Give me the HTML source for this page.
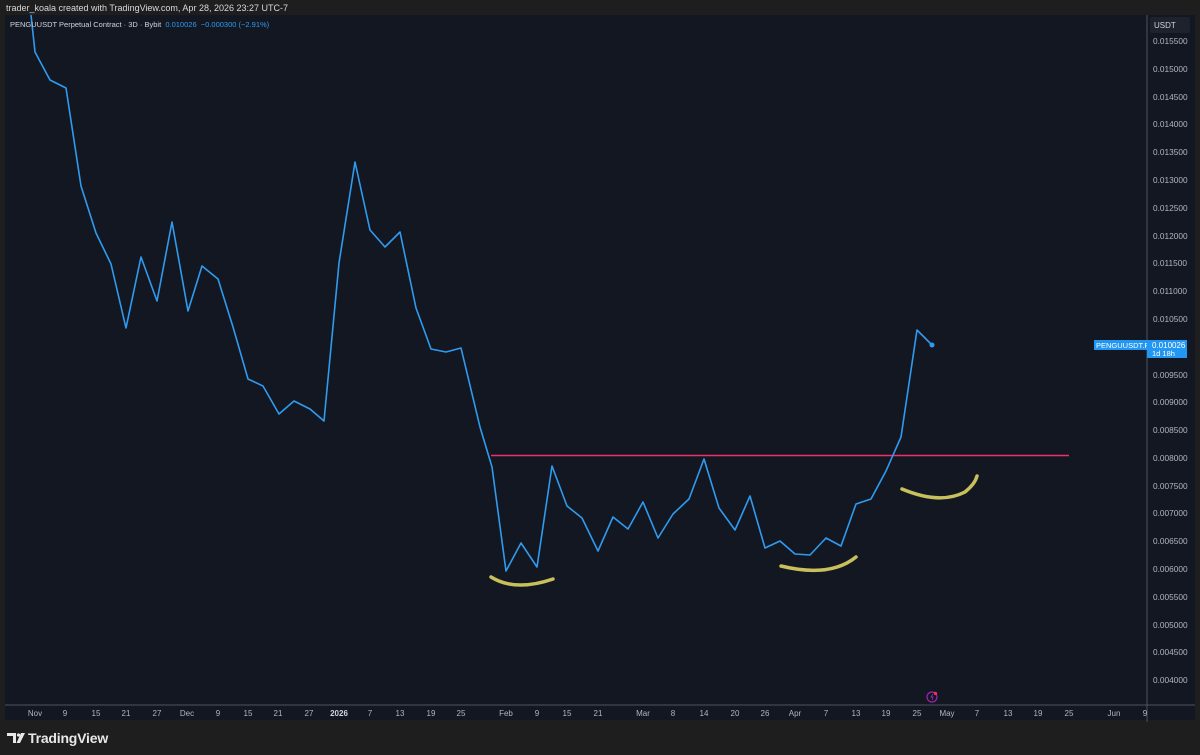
<!DOCTYPE html>
<html><head><meta charset="utf-8"><style>
body{margin:0;width:1200px;height:755px;background:#1e1e1f;overflow:hidden;font-family:"Liberation Sans",sans-serif;position:relative}
.t{position:absolute;white-space:nowrap}
</style></head><body>
<div class="t" style="left:6px;top:3px;font-size:9px;color:#d8d8d8">trader_koala created with TradingView.com, Apr 28, 2026 23:27 UTC-7</div>
<svg width="1200" height="755" style="position:absolute;left:0;top:0">
<rect x="5" y="15" width="1190" height="705" fill="#131722"/>
<line x1="1147" y1="15" x2="1147" y2="722" stroke="#50535e" stroke-width="1"/>
<line x1="5" y1="705" x2="1195" y2="705" stroke="#50535e" stroke-width="1"/>
<rect x="1150" y="17" width="40" height="16" fill="#1e222d" rx="2"/>
<text x="1154" y="28" font-size="8" fill="#d1d4dc" font-family="Liberation Sans">USDT</text>
<g font-size="8.3" fill="#b2b5be" font-family="Liberation Sans">
<text x="1153" y="44">0.015500</text><text x="1153" y="72">0.015000</text><text x="1153" y="100">0.014500</text><text x="1153" y="127">0.014000</text><text x="1153" y="155">0.013500</text><text x="1153" y="183">0.013000</text><text x="1153" y="211">0.012500</text><text x="1153" y="239">0.012000</text><text x="1153" y="266">0.011500</text><text x="1153" y="294">0.011000</text><text x="1153" y="322">0.010500</text><text x="1153" y="378">0.009500</text><text x="1153" y="405">0.009000</text><text x="1153" y="433">0.008500</text><text x="1153" y="461">0.008000</text><text x="1153" y="489">0.007500</text><text x="1153" y="516">0.007000</text><text x="1153" y="544">0.006500</text><text x="1153" y="572">0.006000</text><text x="1153" y="600">0.005500</text><text x="1153" y="628">0.005000</text><text x="1153" y="655">0.004500</text><text x="1153" y="683">0.004000</text>
</g>
<rect x="1094" y="340" width="53" height="10" fill="#2196f3"/>
<text x="1096" y="348" font-size="7.5" fill="#fff">PENGUUSDT.P</text>
<rect x="1147" y="340" width="40" height="18" fill="#2196f3"/>
<text x="1152" y="348" font-size="8" fill="#fff">0.010026</text>
<text x="1152" y="356" font-size="7.5" fill="#fff">1d 18h</text>
<g font-size="8" fill="#b2b5be" text-anchor="middle" font-family="Liberation Sans">
<text x="35" y="716">Nov</text><text x="65" y="716">9</text><text x="96" y="716">15</text><text x="126" y="716">21</text><text x="157" y="716">27</text><text x="187" y="716">Dec</text><text x="218" y="716">9</text><text x="248" y="716">15</text><text x="278" y="716">21</text><text x="309" y="716">27</text><text x="339" y="716" font-weight="bold" fill="#d1d4dc">2026</text><text x="370" y="716">7</text><text x="400" y="716">13</text><text x="431" y="716">19</text><text x="461" y="716">25</text><text x="506" y="716">Feb</text><text x="537" y="716">9</text><text x="567" y="716">15</text><text x="598" y="716">21</text><text x="643" y="716">Mar</text><text x="673" y="716">8</text><text x="704" y="716">14</text><text x="735" y="716">20</text><text x="765" y="716">26</text><text x="795" y="716">Apr</text><text x="826" y="716">7</text><text x="856" y="716">13</text><text x="886" y="716">19</text><text x="917" y="716">25</text><text x="947" y="716">May</text><text x="977" y="716">7</text><text x="1008" y="716">13</text><text x="1038" y="716">19</text><text x="1069" y="716">25</text><text x="1114" y="716">Jun</text><text x="1145" y="716">9</text>
</g>
<line x1="491" y1="455.5" x2="1069" y2="455.5" stroke="#f0306a" stroke-width="1.5"/>
<polyline fill="none" stroke="#2f9bf0" stroke-width="1.6" stroke-linejoin="round" points="31,15 35,52 50,80 66,88 81,186 96,233 111,264 126,328 141,257 157,301 172,222 188,311 202,266 218,279 233,327 248,379 263,386 279,414 294,401 310,409 324,421 339,263 355,162 370,230 385,247 400,232 416,308 431,349 446,352 461,348 480,427 492,467 506,571 521,543 537,567 552,466 567,506 582,518 598,551 613,517 628,529 643,502 658,538 673,514 689,499 704,459 719,508 735,530 750,496 765,548 780,541 795,554 810,555 826,538 841,546 856,504 871,499 886,471 901,437 917,330 932,345"/>
<circle cx="932" cy="345" r="2.5" fill="#2f9bf0"/>
<g fill="none" stroke="#c8c05c" stroke-width="3.5" stroke-linecap="round">
<path d="M491,577 Q515,592 553,579"/>
<path d="M781,566 Q830,578 856,557"/>
<path d="M902,489 Q940,505 965,492 Q975,484 977,476"/>
</g>
<circle cx="932" cy="697" r="5" fill="none" stroke="#9c27b0" stroke-width="1.2"/>
<circle cx="935.5" cy="693.5" r="1.6" fill="#f23645"/>
<path d="M933,694 l-2,3 h2 l-1,3" stroke="#9c27b0" stroke-width="0.9" fill="none"/>
<g fill="#e8e8e8">
<path d="M7,733 h9 v10 h-3 v-7 h-6 z"/>
<circle cx="18.5" cy="735" r="1.6"/>
<path d="M21,733 h4 l-5,10 h-3.5 z"/>
</g>
</svg>
<div class="t" style="left:10px;top:20px;font-size:7.5px;color:#d1d4dc">PENGUUSDT Perpetual Contract · 3D · Bybit <span style="color:#2f9bf0">&nbsp;0.010026 &nbsp;−0.000300 (−2.91%)</span></div>
<div class="t" style="left:28px;top:730px;font-size:14px;color:#e8e8e8;font-weight:bold;letter-spacing:-0.2px">TradingView</div>
</body></html>
